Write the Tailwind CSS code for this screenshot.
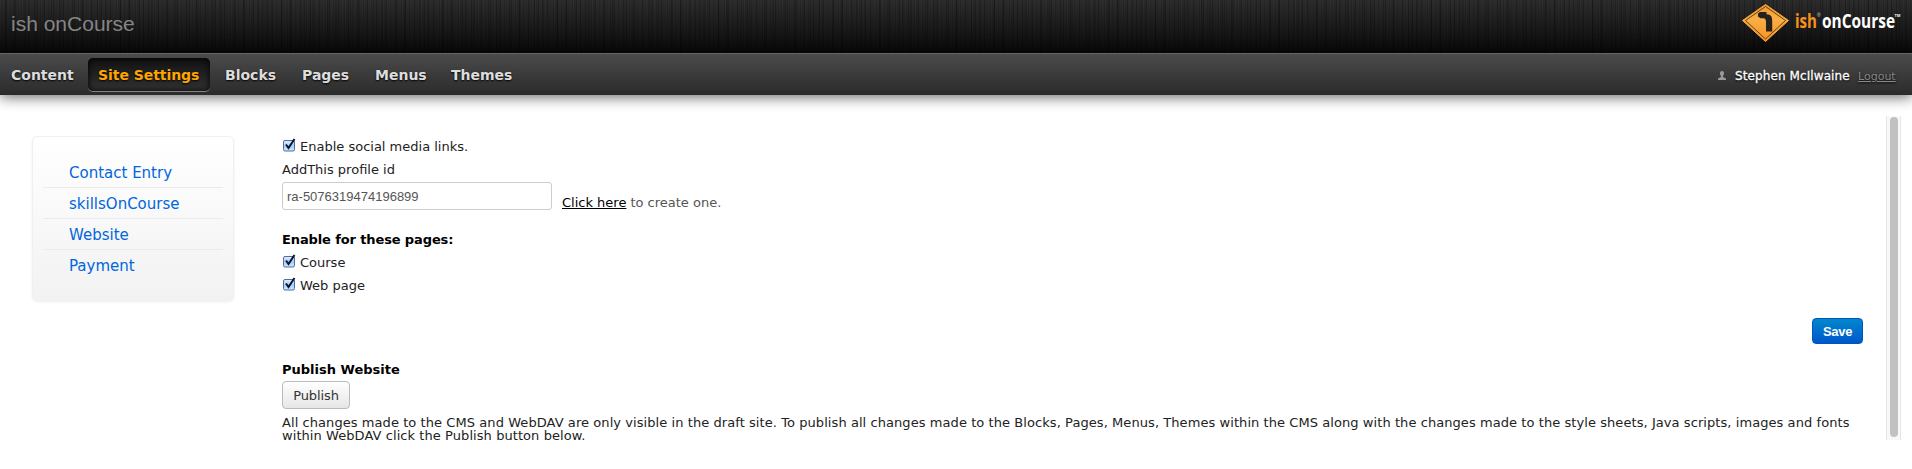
<!DOCTYPE html>
<html lang="en">
<head>
<meta charset="utf-8">
<title>ish onCourse</title>
<script src="https://cdn.jsdelivr.net/npm/@tailwindcss/browser@4"></script>
</head>
<body class="h-[469px] overflow-hidden bg-white font-['DejaVu_Sans',sans-serif] text-[13px] text-[#222]">
<svg class="absolute size-0"><defs>
<linearGradient id="cb" x1="0" y1="0" x2="0" y2="1"><stop offset="0" stop-color="#e4f1fc"/><stop offset=".5" stop-color="#a3cef5"/><stop offset="1" stop-color="#c9ecff"/></linearGradient>
<symbol id="check" viewBox="0 0 14 14"><rect x="1.500" y="2.500" width="11" height="10.500" rx="1.500" fill="url(#cb)" stroke="#5569a5"/><path d="M4 6.500 6.500 10 12.500 1" fill="none" stroke="#0b1431" stroke-width="2"/></symbol>
</defs></svg>
<header class="flex h-[53px] items-start justify-between bg-[linear-gradient(#0000,#000c),repeating-linear-gradient(90deg,#0000_0_5px,#0003_5px_6px,#0000_6px_13px,#0002_13px_15px,#0000_15px_23px),repeating-linear-gradient(90deg,#2d2d2d_0_2px,#262626_2px_3px,#303030_3px_4px,#292929_4px_6px,#222_6px_7px,#2d2d2d_7px_10px,#272727_10px_11px,#2c2c2c_11px_15px,#222_15px_16px,#2b2b2b_16px_19px)] pl-[11px]">
  <h1 class="mt-3 font-['Liberation_Sans',sans-serif] text-[21px] leading-6 whitespace-nowrap text-[#858585]">ish onCourse</h1>
  <svg class="h-[48px] w-[172px]" viewBox="0 0 172 48">
    <defs><linearGradient id="sign" x1="0" y1="0" x2="0" y2="1"><stop offset="0" stop-color="#ee9a31"/><stop offset=".4" stop-color="#f9ae45"/><stop offset="1" stop-color="#f59321"/></linearGradient></defs>
    <path d="M25.500 4.500 48.500 20.500 25.500 41.500 2.500 20.500Z" fill="url(#sign)" stroke="#f9a63a" stroke-linejoin="round"/>
    <path d="M25.500 6.500 45.500 20.500 25.500 39 5.500 20.500Z" fill="none" stroke="#553813" stroke-width=".9"/>
    <path d="M18 13.500 20 12 26.500 12V14.300C31 14.200 32.500 17 32.200 22V31.500H26V23C26 19.500 25.500 18.400 23 18.200H20.500L18 16.500Z" fill="#25221e"/>
    <text x="55" y="27.500" textLength="22" lengthAdjust="spacingAndGlyphs" font-family="Open Sans" font-weight="700" font-size="20" fill="#f6921e">ish</text>
    <text x="77" y="16.500" font-family="Liberation Sans" font-size="5" fill="#ddd">®</text>
    <text x="82" y="27.500" textLength="73" lengthAdjust="spacingAndGlyphs" font-family="Open Sans" font-weight="700" font-size="20" fill="#fff">onCourse</text>
    <text x="154.500" y="16.500" font-family="Liberation Sans" font-weight="700" font-size="4" fill="#fff">TM</text>
  </svg>
</header>
<nav class="relative flex h-[42px] items-center justify-between border-t border-[#656565] bg-gradient-to-b from-[#4b4b4b] to-[#2b2b2b] pr-4 shadow-[0_2px_14px_#0009] whitespace-nowrap">
  <div class="flex items-center text-[14px] font-bold text-[#ddd] [text-shadow:0_1px_2px_#000]">
    <a class="ml-[11px] w-[77px] pt-[2px]">Content</a>
    <a class="flex h-[34px] w-[122px] items-center rounded-[5px] border-b border-[#858585] bg-gradient-to-b from-[#111] to-[#333] pt-[3px] pl-[10px] tracking-[-.05px] text-[#ffa500] shadow-[inset_0_0_6px_#000]">Site Settings</a>
    <a class="ml-[15px] w-[77px] pt-[2px]">Blocks</a>
    <a class="w-[73px] pt-[2px]">Pages</a>
    <a class="w-[76px] pt-[2px]">Menus</a>
    <a class="pt-[2px]">Themes</a>
  </div>
  <div class="flex items-center pt-[2px] text-[12px] [text-shadow:0_1px_2px_#000]">
    <svg class="mr-[9px] h-[9px] w-[8px]" viewBox="0 0 8 9" fill="#999"><path d="M4 0C7 0 6 4 5 5V6L8 7.500V9H0V7.500L3 6V5C2 4 1 0 4 0Z"/></svg>
    <span class="w-[123px] tracking-[.1px] text-white [-webkit-text-stroke:.3px_#fff]">Stephen McIlwaine</span>
    <a class="w-[38px] pt-[3px] text-[11px] text-[#888] underline">Logout</a>
  </div>
</nav>
<div class="flex">
  <aside class="mt-[41px] ml-[32px] h-[165px] w-[202px] rounded-[5px] border border-[#f0f0f0] bg-gradient-to-b from-white to-[#f2f2f2] px-[10px] pt-[20px] text-[15px] leading-[32px] text-[#0066dd] shadow-[0_1px_3px_#0001]">
    <a class="block h-[31px] border-b border-[#ebebeb] pl-[26px]">Contact Entry</a>
    <a class="block h-[31px] border-b border-[#ebebeb] pl-[26px]">skillsOnCourse</a>
    <a class="block h-[31px] border-b border-[#ebebeb] pl-[26px]">Website</a>
    <a class="block h-[31px] pl-[26px]">Payment</a>
  </aside>
  <main class="ml-[48px] w-[1581px] pt-[41px] whitespace-nowrap">
    <label class="flex h-[20px] items-center gap-1"><svg class="size-[14px] -translate-y-px"><use href="#check"/></svg><span class="pt-px">Enable social media links.</span></label>
    <p class="mt-[6px] h-[20px] leading-4">AddThis profile id</p>
    <div class="flex h-[28px]">
      <div class="h-[28px] w-[270px] rounded-[3px] border border-[#ccc] pl-1 font-['Liberation_Sans',sans-serif] text-[13px] leading-[27px] text-[#555]">ra-5076319474196899</div>
      <p class="mt-[13px] ml-[10px] flex h-4 gap-1 leading-4 text-[#555]"><a class="text-black underline">Click here</a><span>to create one.</span></p>
    </div>
    <h2 class="mt-[20px] h-[21px] leading-[20px] font-bold tracking-[-.12px] text-black">Enable for these pages:</h2>
    <label class="flex h-[23px] items-center gap-1"><svg class="size-[14px] -translate-y-[2px]"><use href="#check"/></svg>Course</label>
    <label class="flex h-[23px] items-center gap-1"><svg class="size-[14px] -translate-y-[2px]"><use href="#check"/></svg>Web page</label>
    <div class="mt-[21px] flex justify-end"><button class="h-[26px] w-[51px] rounded-[4px] border border-[#0055bb] bg-gradient-to-b from-[#0088cc] to-[#0055cc] pt-px font-['Liberation_Sans',sans-serif] text-[13px] font-bold tracking-[-.3px] text-white">Save</button></div>
    <h2 class="mt-[16px] h-[21px] leading-[20px] font-bold text-black">Publish Website</h2>
    <button class="block h-[28px] w-[68px] rounded-[4px] border border-[#bbb] bg-gradient-to-b from-white to-[#e6e6e6] pt-[2px] text-[#333] tracking-[-.1px]">Publish</button>
    <p class="mt-[7px] leading-[13px] tracking-[.07px]">All changes made to the CMS and WebDAV are only visible in the draft site. To publish all changes made to the Blocks, Pages, Menus, Themes within the CMS along with the changes made to the style sheets, Java scripts, images and fonts<br>within WebDAV click the Publish button below.</p>
  </main>
  <div class="mt-[21px] ml-[23px] h-[324px] w-[15px] border-x border-[#e6e6e6] bg-[#f8f8f8] px-[3px] pt-px"><div class="h-[320px] w-[8px] rounded-full bg-[#c1c1c1]"></div></div>
</div>
</body>
</html>
